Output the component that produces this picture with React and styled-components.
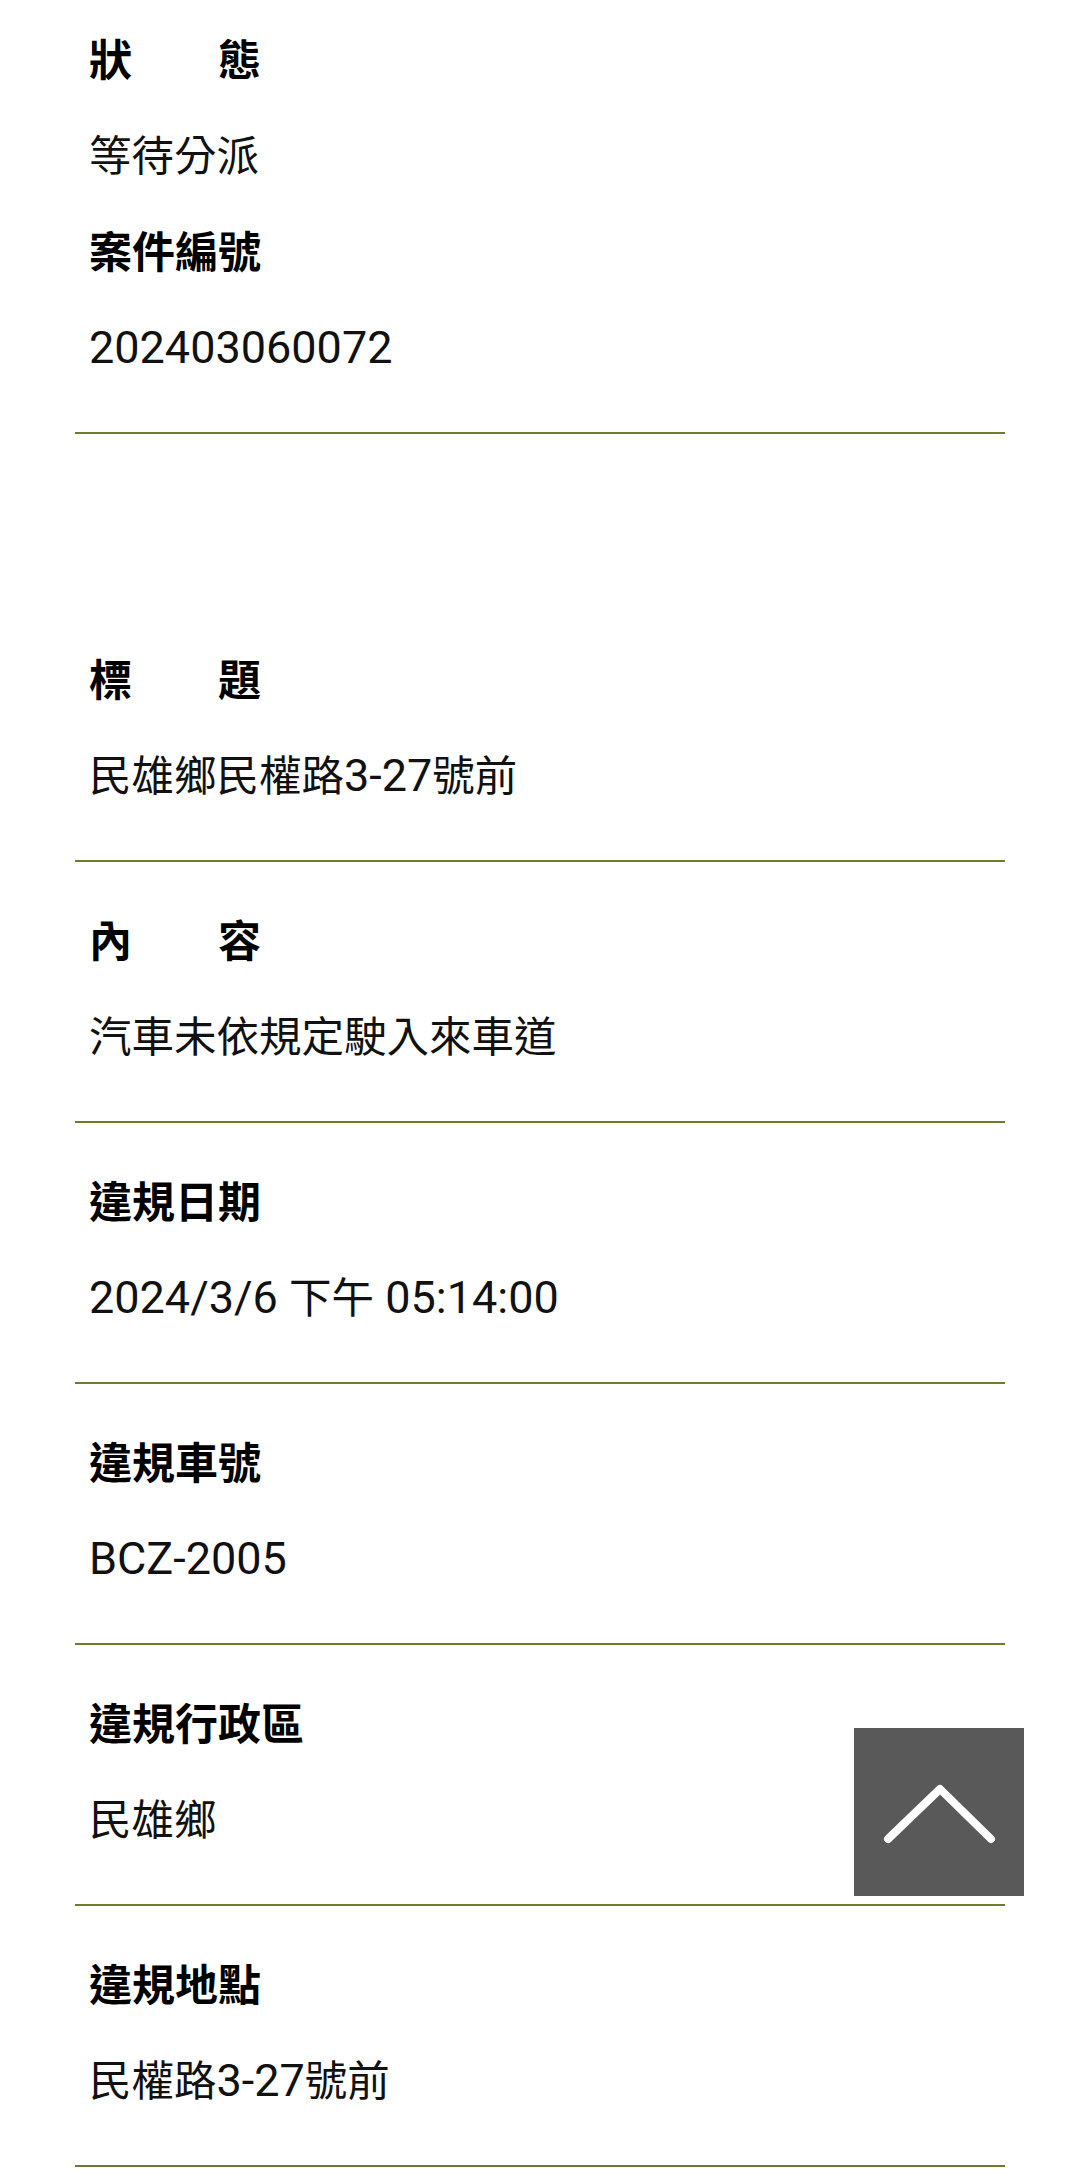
import React from 'react';
import styled, { createGlobalStyle } from 'styled-components';

const GlobalStyle = createGlobalStyle`
  html, body {
    margin: 0;
    padding: 0;
    background: #ffffff;
  }
  body {
    font-family: Roboto, "Noto Sans CJK TC", sans-serif;
    color: #111;
  }
`;

const Page = styled.div`
  position: relative;
  min-height: 2181px;
  padding: 13px 75px 0 75px;
  box-sizing: border-box;
`;

const Card = styled.section`
  padding: ${(p) => (p.first ? '0' : '32px')} 0 35px 14px;
  margin-top: ${(p) => p.gap || 0}px;
  border-bottom: 2px solid #6b7d2f;
`;

const Label = styled.div`
  font-size: 43px;
  line-height: 96px;
  font-weight: 700;
  color: #000;
  white-space: pre;
`;

const Value = styled.div`
  font-size: 42.5px;
  line-height: 96px;
  height: 96px;
  font-weight: 400;
  color: #111;
`;

// Latin runs render a little larger than the CJK glyphs in the source
const Latin = styled.span`
  font-size: 45px;
  line-height: 1;
`;

const TopButton = styled.button`
  position: absolute;
  left: 854px;
  top: 1728px;
  width: 170px;
  height: 168px;
  border: none;
  padding: 0;
  background: #595959;
  display: flex;
  align-items: center;
  justify-content: center;
  cursor: pointer;
`;

const rows = [
  { label: '標　　題', value: '民雄鄉民權路3-27號前' },
  { label: '內　　容', value: '汽車未依規定駛入來車道' },
  { label: '違規日期', value: '2024/3/6 下午 05:14:00' },
  { label: '違規車號', value: 'BCZ-2005' },
  { label: '違規行政區', value: '民雄鄉' },
  { label: '違規地點', value: '民權路3-27號前' },
];

const renderText = (text) =>
  text.split(/([\u0020-\u007e]+)/).map((part, i) =>
    /^[\u0020-\u007e]+$/.test(part) ? <Latin key={i}>{part}</Latin> : part
  );

export default function App() {
  return (
    <>
      <GlobalStyle />
      <Page>
        <Card first>
          <Label>狀　　態</Label>
          <Value>等待分派</Value>
          <Label>案件編號</Label>
          <Value>{renderText('202403060072')}</Value>
        </Card>
        {rows.map((row, index) => (
          <Card key={index} gap={index === 0 ? 167 : 0}>
            <Label>{row.label}</Label>
            <Value>{renderText(row.value)}</Value>
          </Card>
        ))}
        <TopButton aria-label='回到頂端'>
          <svg width='170' height='168' viewBox='0 0 170 168'>
            <polyline
              points='34,111 86,61 137,111'
              fill='none'
              stroke='#ffffff'
              strokeWidth='8'
              strokeLinecap='round'
              strokeLinejoin='round'
            />
          </svg>
        </TopButton>
      </Page>
    </>
  );
}
